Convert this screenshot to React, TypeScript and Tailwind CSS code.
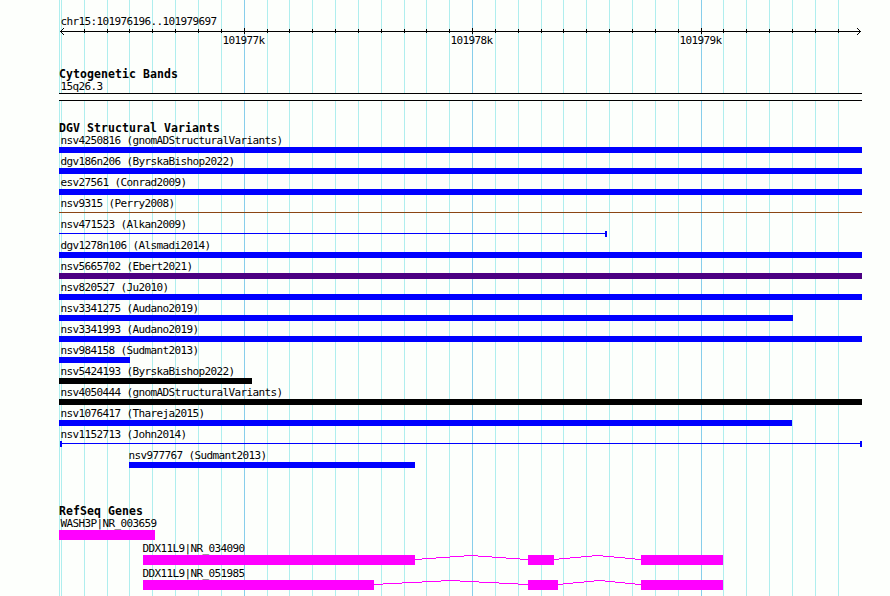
const MINOR = [
  61, 84, 107, 129, 152, 175, 198, 221, 267, 289, 312, 335, 358, 381, 404, 426, 449, 495, 518, 541,
  563, 586, 609, 632, 655, 678, 723, 746, 769, 792, 815, 838,
];
const MAJOR = [244, 472, 701];
const LEFT = 59;

const label = "block whitespace-pre pl-[0.5px] font-['DejaVu_Sans_Mono',monospace] text-[11px] leading-[12px] tracking-[-0.62px] text-black";
const heading = "block h-3 whitespace-pre pl-[59px] font-['DejaVu_Sans_Mono',monospace] text-[11.5px] font-bold leading-[10px] tracking-[0.077px] text-black";

type Variant = { name: string; start?: number; end?: number; color?: string; kind?: 'bar' | 'line'; caps?: 'both' | 'right' };

const VARIANTS: Variant[] = [
  { name: 'nsv4250816 (gnomADStructuralVariants)' },
  { name: 'dgv186n206 (ByrskaBishop2022)' },
  { name: 'esv27561 (Conrad2009)' },
  { name: 'nsv9315 (Perry2008)', kind: 'line', color: 'bg-[#8b4513]' },
  { name: 'nsv471523 (Alkan2009)', kind: 'line', end: 607, caps: 'right' },
  { name: 'dgv1278n106 (Alsmadi2014)' },
  { name: 'nsv5665702 (Ebert2021)', color: 'bg-[#4b0082]' },
  { name: 'nsv820527 (Ju2010)' },
  { name: 'nsv3341275 (Audano2019)', end: 793 },
  { name: 'nsv3341993 (Audano2019)' },
  { name: 'nsv984158 (Sudmant2013)', end: 130 },
  { name: 'nsv5424193 (ByrskaBishop2022)', end: 252, color: 'bg-black' },
  { name: 'nsv4050444 (gnomADStructuralVariants)', color: 'bg-black' },
  { name: 'nsv1076417 (Thareja2015)', end: 792 },
  { name: 'nsv1152713 (John2014)', kind: 'line', start: 60, caps: 'both' },
  { name: 'nsv977767 (Sudmant2013)', start: 129, end: 415 },
];

type Gene = { name: string; exons: [number, number][]; introns: number[][] };

// Each intron lists the x positions where its stepped arc changes height.
const GENES: Gene[] = [
  { name: 'WASH3P|NR_003659', exons: [[59, 155]], introns: [] },
  {
    name: 'DDX11L9|NR_034090',
    exons: [[143, 415], [528, 554], [641, 723]],
    introns: [
      [415, 422, 436, 450, 464, 478, 492, 506, 520, 528],
      [554, 559, 570, 581, 592, 603, 614, 625, 635, 641],
    ],
  },
  {
    name: 'DDX11L9|NR_051985',
    exons: [[143, 374], [528, 558], [641, 723]],
    introns: [
      [374, 383, 402, 422, 441, 460, 479, 499, 518, 528],
      [558, 563, 573, 584, 594, 605, 615, 625, 635, 641],
    ],
  },
];

function Grid() {
  return (
    <svg className="absolute inset-0" width="890" height="596" shapeRendering="crispEdges" aria-hidden="true">
      {[LEFT, ...MINOR].map((x) => (
        <rect key={x} x={x} y="0" width="1" height="596" fill="#afeeee" />
      ))}
      {MAJOR.map((x) => (
        <rect key={x} x={x} y="0" width="1" height="596" fill="#87ceeb" />
      ))}
    </svg>
  );
}

function Ruler() {
  return (
    <svg className="block" width="890" height="8" shapeRendering="crispEdges" aria-hidden="true">
      <rect x="60" y="4" width="801" height="1" />
      {MINOR.filter((x) => x > LEFT + 5).map((x) => (
        <rect key={x} x={x} y="2" width="1" height="4" />
      ))}
      {MAJOR.map((x) => (
        <rect key={x} x={x} y="1" width="1" height="6" />
      ))}
      {[1, 2, 3].map((d) => (
        <g key={d}>
          <rect x={60 + d} y={4 - d} width="1" height="1" />
          <rect x={60 + d} y={4 + d} width="1" height="1" />
          <rect x={860 - d} y={4 - d} width="1" height="1" />
          <rect x={860 - d} y={4 + d} width="1" height="1" />
        </g>
      ))}
    </svg>
  );
}

function VariantRow({ name, start = LEFT, end = 862, color = 'bg-[#0000ff]', kind = 'bar', caps }: Variant) {
  return (
    <div className="h-[21px]">
      <div style={{ marginLeft: start, width: end - start }}>
        <span className={label + (start > 100 ? ' -ml-px' : start === LEFT ? ' ml-px' : '')}>{name}</span>
        {kind === 'bar' ? (
          <div className={'h-1.5 ' + color} />
        ) : (
          <div className="flex h-1.5">
            {caps === 'both' && <div className="h-1.5 w-0.5 bg-[#0000ff]" />}
            <div className={'mt-0.5 h-px flex-1 ' + color} />
            {caps && <div className="h-1.5 w-0.5 bg-[#0000ff]" />}
          </div>
        )}
      </div>
    </div>
  );
}

function GeneRow({ name, exons, introns }: Gene) {
  const start = exons[0][0];
  return (
    <div className="h-[25px]">
      <span className={label} style={{ marginLeft: start === LEFT ? 60 : start - 1 }}>
        {name}
      </span>
      <svg className="block" width="890" height="10" shapeRendering="crispEdges" aria-hidden="true">
        {exons.map(([a, b]) => (
          <rect key={a} x={a} y="0" width={b - a} height="10" fill="#ff00ff" />
        ))}
        {introns.map((xs) =>
          xs.slice(1).map((x, i) => (
            <rect key={x} x={xs[i]} y={Math.abs(i - 4)} width={x - xs[i]} height="1" fill="#ff00ff" />
          )),
        )}
      </svg>
    </div>
  );
}

export default function App() {
  return (
    <div className="relative h-[596px] w-[890px] overflow-hidden bg-[#fdfffc]">
      <Grid />
      <main className="relative flex flex-col">
        <header className="flex h-[69px] flex-col pt-4">
          <span className={label + ' ml-[60px] h-[11px]'}>chr15:101976196..101979697</span>
          <Ruler />
          <div className="flex">
            <span className={label + ' ml-[222px] w-[228px]'}>101977k</span>
            <span className={label + ' w-[229px]'}>101978k</span>
            <span className={label}>101979k</span>
          </div>
        </header>
        <section className="h-[54px]">
          <h2 className={heading}>Cytogenetic Bands</h2>
          <span className={label + ' ml-[60px]'}>15q26.3</span>
          <div className="ml-[59px] h-2 w-[803px] border-y border-black bg-[#fdfffc]" />
        </section>
        <section className="h-[383px]">
          <h2 className={heading}>DGV Structural Variants</h2>
          {VARIANTS.map((v) => (
            <VariantRow key={v.name} {...v} />
          ))}
        </section>
        <section>
          <h2 className={heading}>RefSeq Genes</h2>
          {GENES.map((g) => (
            <GeneRow key={g.name} {...g} />
          ))}
        </section>
      </main>
    </div>
  );
}
